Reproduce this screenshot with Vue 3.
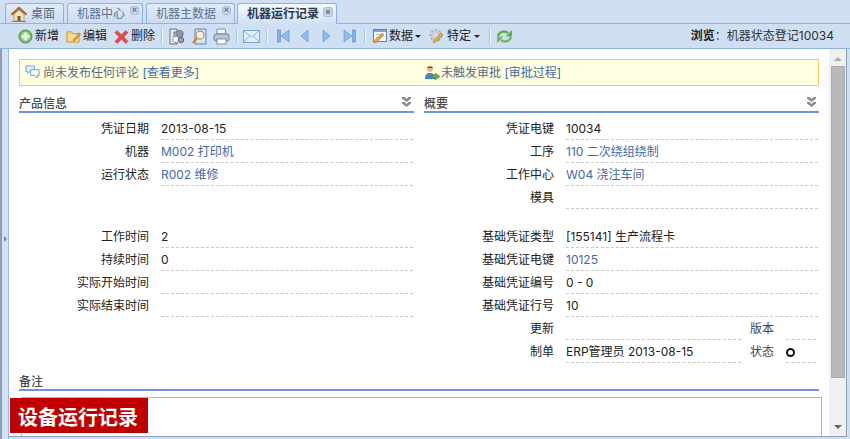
<script setup>
const leftA = [
  { l: '凭证日期', v: '2013-08-15' },
  { l: '机器', v: 'M002 打印机', link: true },
  { l: '运行状态', v: 'R002 维修', link: true },
]
const leftB = [
  { l: '工作时间', v: '2' },
  { l: '持续时间', v: '0' },
  { l: '实际开始时间', v: '' },
  { l: '实际结束时间', v: '' },
]
const rightA = [
  { l: '凭证电键', v: '10034' },
  { l: '工序', v: '110 二次绕组绕制', link: true },
  { l: '工作中心', v: 'W04 浇注车间', link: true },
  { l: '模具', v: '' },
]
const rightB = [
  { l: '基础凭证类型', v: '[155141] 生产流程卡' },
  { l: '基础凭证电键', v: '10125', link: true },
  { l: '基础凭证编号', v: '0 - 0' },
  { l: '基础凭证行号', v: '10' },
]
</script>

<template>
  <div class="app">
    <div class="tabs">
      <div class="tab home">
        <svg class="i16" viewBox="0 0 16 16"><path d="M0 8 8 .8 16 8l-1.300 1.200L8 3.300 1.300 9.200z" fill="#b5652b" stroke="#7f4a20" stroke-width=".4"/><path d="M3 8.500 8 4l5 4.500V15H3z" fill="#f3e2b8" stroke="#9a7b4a" stroke-width=".6"/><rect x="6.500" y="10" width="3" height="5" fill="#7d5a33"/><path d="M1 15h14v1H1z" fill="#5da34a"/></svg>
        <span>桌面</span>
      </div>
      <div class="tab t2"><span>机器中心</span><i class="x">×</i></div>
      <div class="tab t3"><span>机器主数据</span><i class="x">×</i></div>
      <div class="tab active"><span>机器运行记录</span><i class="x">×</i></div>
    </div>

    <div class="toolbar">
      <button class="btn">
        <svg class="i15" viewBox="0 0 16 16"><circle cx="8" cy="8" r="7" fill="#79b865" stroke="#5c8f57"/><circle cx="8" cy="8" r="5" fill="#a7d79a"/><path d="M7 4h2v3h3v2H9v3H7V9H4V7h3z" fill="#fff"/></svg>
        <span>新增</span>
      </button>
      <button class="btn">
        <svg class="i15" viewBox="0 0 16 16"><path d="M1 3h5l1 2h7v9H1z" fill="#f5d67a" stroke="#c79a3e"/><path d="M3 7h10v1H3zM3 10h7v1H3z" fill="#fff3c4"/><path d="m8 11 6-7 1.500 1.500-6 7-2 .5z" fill="#e8a33c" stroke="#a96f1f" stroke-width=".5"/></svg>
        <span>编辑</span>
      </button>
      <button class="btn">
        <svg class="i15" viewBox="0 0 16 16"><path d="M3 1.500 8 6l4.500-4.500L15 4l-4.500 4.500L15 13l-2.500 2.500L8 11l-4.500 4.500L1 13l4.500-4.500L1 4z" fill="#e24b4b" stroke="#c53a3a" stroke-width=".5"/></svg>
        <span>删除</span>
      </button>
      <span class="sep"></span>
      <button class="btn ico w17">
        <svg class="i17" viewBox="0 0 17 17"><path d="M2 1h7v3H6v10l3 1v1H2z" fill="#e6e9ef" stroke="#4f5866" stroke-width=".8"/><circle cx="11.500" cy="6" r="3.700" fill="#8c95a5" stroke="#464e5c" stroke-width=".8" stroke-dasharray="1.500 .7"/><circle cx="8" cy="11.500" r="3.200" fill="#f1f3f7" stroke="#464e5c" stroke-width=".8" stroke-dasharray="1.500 .7"/><circle cx="13" cy="12" r="2.700" fill="#9aa3b2" stroke="#464e5c" stroke-width=".8"/></svg>
      </button>
      <button class="btn ico w15">
        <svg class="i15h" viewBox="0 0 15 17"><path d="M3 1h11v15H3z" fill="#cfe3fb" stroke="#5a85bf"/><circle cx="8" cy="7" r="4" fill="#e8f2fd" stroke="#e2912f" stroke-width="1.300"/><path d="M5 10 1 15" stroke="#d6812a" stroke-width="2.200"/></svg>
      </button>
      <button class="btn ico w17 gapped">
        <svg class="i17" viewBox="0 0 17 17"><path d="M4 1h8l1 5H4z" fill="#f3f6fa" stroke="#5b7fa8" stroke-width=".8"/><rect x="1" y="6" width="15" height="7" rx="2" fill="#b6c6da" stroke="#5f6d80" stroke-width=".8"/><rect x="4" y="11" width="9" height="5" fill="#fff" stroke="#6a7686" stroke-width=".8"/></svg>
      </button>
      <span class="sep"></span>
      <button class="btn ico w17 gapped">
        <svg class="i17" viewBox="0 0 17 13"><rect x=".5" y=".5" width="16" height="12" fill="#e3eefb" stroke="#7da6d8"/><path d="m1 1 7.500 6L16 1M1 12l5.500-6M16 12l-5.500-6" fill="none" stroke="#8fb3e0"/></svg>
      </button>
      <span class="sep"></span>
      <button class="btn ico nav first">
        <svg class="i13" viewBox="0 0 13 14"><rect x=".5" y="1" width="3" height="12" fill="#7fb0e8" stroke="#5a8fd0" stroke-width=".6"/><path d="M12 1v12L4 7z" fill="#8fbcee" stroke="#5a8fd0" stroke-width=".6"/></svg>
      </button>
      <button class="btn ico nav prev">
        <svg class="i9" viewBox="0 0 9 14"><path d="M8 1v12L1 7z" fill="#8fbcee" stroke="#5a8fd0" stroke-width=".6"/></svg>
      </button>
      <button class="btn ico nav next">
        <svg class="i9" viewBox="0 0 9 14"><path d="M1 1v12l7-6z" fill="#8fbcee" stroke="#5a8fd0" stroke-width=".6"/></svg>
      </button>
      <button class="btn ico nav last">
        <svg class="i13" viewBox="0 0 13 14"><path d="M1 1v12l8-6z" fill="#8fbcee" stroke="#5a8fd0" stroke-width=".6"/><rect x="9.500" y="1" width="3" height="12" fill="#7fb0e8" stroke="#5a8fd0" stroke-width=".6"/></svg>
      </button>
      <span class="sep s5"></span>
      <button class="btn menu">
        <svg class="i16" viewBox="0 0 16 16"><rect x="1.500" y="1.500" width="13" height="12" fill="#f4f8fd" stroke="#5b84b8"/><path d="M2 2h12v2H2z" fill="#7ea6d8"/><path d="M4 6h8v1H4zM4 9h5v1H4z" fill="#a9c3e2"/><path d="m2 15 1-3 7-7 2 2-7 7z" fill="#eaa63d" stroke="#a8701f" stroke-width=".5"/></svg>
        <span>数据</span><i class="caret"></i>
      </button>
      <button class="btn menu m2">
        <svg class="i16" viewBox="0 0 16 16"><circle cx="7" cy="7.500" r="4.500" fill="none" stroke="#a6a6a0" stroke-width="3.500" stroke-dasharray="2 1.300"/><circle cx="7" cy="7.500" r="4" fill="none" stroke="#cfcfca" stroke-width="2"/><path d="m4 15 1-3 7-7 2 2-7 7z" fill="#eaa63d" stroke="#a8701f" stroke-width=".5"/></svg>
        <span>特定</span><i class="caret"></i>
      </button>
      <span class="sep s6"></span>
      <button class="btn ico refresh">
        <svg class="i17" viewBox="0 0 17 15"><path d="M2 7C3 3 8 1 12 4" fill="none" stroke="#5fae48" stroke-width="2.600"/><path d="M16 1v6.500H9.500z" fill="#5fae48"/><path d="M15 8c-1 4-6 6-10 3" fill="none" stroke="#6fbb57" stroke-width="2.600"/><path d="M1 14V7.500h6.500z" fill="#6fbb57"/></svg>
      </button>
      <div class="browse"><b>浏览</b><span>：机器状态登记10034</span></div>
    </div>

    <div class="main">
      <div class="strip"><i class="grip"></i></div>
      <div class="content">
        <div class="scroll-body">
          <div class="notice">
            <div class="note">
              <svg class="i15" viewBox="0 0 16 16"><path d="M1 1h9v6H5l-2 2V7H1z" fill="#e4f0fc" stroke="#6f9bd1"/><path d="M6 5h9v6h-2v3l-3-3H6z" fill="#fff" stroke="#6f9bd1"/></svg>
              <span>尚未发布任何评论 <a>[查看更多]</a></span>
            </div>
            <div class="note n2">
              <svg class="i16" viewBox="0 0 16 16"><circle cx="6" cy="4" r="3" fill="#e7b98a"/><path d="M3 3c0-2 6-2 6 0H3z" fill="#7a4a22"/><path d="M1 14c0-5 2-6 5-6s5 1 5 6z" fill="#4d82c4"/><path d="M8 10h3V8l5 3.500-5 3.500v-2H8z" fill="#64ab4e" stroke="#3f7f33" stroke-width=".5"/></svg>
              <span>未触发审批 <a>[审批过程]</a></span>
            </div>
          </div>

          <div class="cols">
            <section class="col">
              <header class="head">
                <h3>产品信息</h3>
                <svg class="chev" viewBox="0 0 9 10"><path d="M0 0h2.500L4.500 2 6.500 0H9v1.500L4.500 5 0 1.500zM0 5h2.500l2 2 2-2H9v1.500L4.500 10 0 6.500z" fill="#8a8a8a"/></svg>
              </header>
              <div class="form">
                <div v-for="r in leftA" :key="r.l" class="row">
                  <label>{{ r.l }}</label><div class="val" :class="{ link: r.link }">{{ r.v }}</div>
                </div>
                <div class="gap left-gap"></div>
                <div v-for="r in leftB" :key="r.l" class="row">
                  <label>{{ r.l }}</label><div class="val">{{ r.v }}</div>
                </div>
              </div>
            </section>
            <section class="col">
              <header class="head">
                <h3>概要</h3>
                <svg class="chev" viewBox="0 0 9 10"><path d="M0 0h2.500L4.500 2 6.500 0H9v1.500L4.500 5 0 1.500zM0 5h2.500l2 2 2-2H9v1.500L4.500 10 0 6.500z" fill="#8a8a8a"/></svg>
              </header>
              <div class="form">
                <div v-for="r in rightA" :key="r.l" class="row">
                  <label>{{ r.l }}</label><div class="val" :class="{ link: r.link }">{{ r.v }}</div>
                </div>
                <div class="gap"></div>
                <div v-for="r in rightB" :key="r.l" class="row">
                  <label>{{ r.l }}</label><div class="val" :class="{ link: r.link }">{{ r.v }}</div>
                </div>
                <div class="row">
                  <label>更新</label><div class="val short"></div>
                  <label class="l2">版本</label><div class="val tiny"></div>
                </div>
                <div class="row">
                  <label>制单</label><div class="val short">ERP管理员 2013-08-15</div>
                  <label class="l2">状态</label><div class="val tiny"><i class="ring"></i></div>
                </div>
              </div>
            </section>
          </div>

          <header class="head remark"><h3>备注</h3></header>
          <div class="textarea"></div>
        </div>
        <div class="scrollbar">
          <i class="arr up"></i>
          <div class="thumb"></div>
          <i class="arr down"></i>
        </div>
      </div>
    </div>
    <div class="banner">设备运行记录</div>
  </div>
</template>

<style>
html, body { margin: 0; padding: 0; overflow: hidden; }
</style>

<style scoped>
.app {
  position: relative;
  width: 850px;
  height: 439px;
  overflow: hidden;
  display: flex;
  flex-direction: column;
  background: #cfdff4;
  font: 12px/16px Inter, "Noto Sans CJK SC", sans-serif;
  color: #222;
  box-sizing: border-box;
}
.i13 { width: 13px; height: 14px; }
.i9 { width: 9px; height: 14px; }
.i15 { width: 15px; height: 15px; }
.i15h { width: 15px; height: 17px; }
.i16 { width: 16px; height: 16px; }
.i17 { width: 17px; height: 17px; }
svg { display: block; flex: none; }

.tabs {
  height: 24px;
  box-sizing: border-box;
  flex: none;
  display: flex;
  align-items: flex-end;
  padding-left: 5px;
  gap: 3px;
  border-bottom: 1px solid #8db2e3;
  background: #d0dff3;
}
.tab {
  height: 20px;
  box-sizing: border-box;
  display: flex;
  align-items: center;
  border: 1px solid #8db2e3;
  border-bottom: 0;
  border-radius: 3px 3px 0 0;
  background: linear-gradient(#e1ebf8, #cddcf2);
  color: #5a7495;
  padding-left: 9px;
  position: relative;
}
.tab.home { width: 59px; padding-left: 5px; gap: 4px; color: #4f6b8f; }
.t2 { width: 76px; }
.t3 { width: 89px; }
.tab.active {
  width: 100px;
  margin-left: -1px;
  height: 21px;
  margin-bottom: -1px;
  background: linear-gradient(#f4f8fd, #d2e0f5);
  color: #2b3b50;
  font-weight: 600;
}
.x {
  position: absolute;
  right: 3px;
  top: 2px;
  width: 9px;
  height: 9px;
  border-radius: 3px;
  background: #c9d6e8;
  border: 1px solid #a8bcd6;
  box-sizing: border-box;
  font: 700 9px/7px "Liberation Sans", sans-serif;
  color: #5f7594;
  text-align: center;
}
.tab.active .x { right: 3px; top: 3px; width: 10px; height: 10px; line-height: 8px; color: #4a5e7a; }

.toolbar {
  height: 25px;
  box-sizing: border-box;
  flex: none;
  display: flex;
  align-items: center;
  padding-left: 18px;
  border-bottom: 1px solid #8db2e3;
  background: #cfdff4;
}
.btn {
  all: unset;
  display: flex;
  align-items: center;
  gap: 2px;
  color: #222;
  margin-right: 7px;
  white-space: nowrap;
}
.btn.ico { margin-right: 6px; }
.btn.ico.gapped { margin-right: 7px; }
.w15 { width: 15px; margin-left: 1px; }
.w17 { width: 17px; }
.sep {
  box-sizing: border-box;
  width: 2px;
  height: 16px;
  background: #f2f7fd;
  border-left: 1px solid #aec6e6;
  margin-left: -1px;
  margin-right: 5px;
}
.btn.ico.nav { margin-right: 0; }
.first { margin-left: 4px; }
.prev { margin-left: 10px; }
.next { margin-left: 13px; }
.last { margin-left: 12px; }
.s5 { margin-left: 8px; margin-right: 6px; }
.btn.menu { gap: 1px; margin-right: 0; }
.m2 { margin-left: 8px; }
.btn.m2 { gap: 2px; }
.caret { width: 0; height: 0; border: 3px solid transparent; border-top-color: #222; border-bottom: 0; margin-left: 1px; }
.s6 { margin-left: 9px; margin-right: 5px; }
.btn.refresh { margin-left: 0; }
.browse { margin-left: auto; margin-right: 16px; color: #333; white-space: nowrap; }
.browse b { font-weight: 700; color: #222; }

.main { flex: 1; min-height: 0; display: flex; }
.strip {
  width: 9px;
  box-sizing: border-box;
  flex: none;
  border-left: 2px solid #8a9dbb;
  border-right: 1px solid #99bbe8;
  background: #d4e1f3;
  display: flex;
  align-items: center;
  padding-bottom: 10px;
}
.grip {
  width: 0; height: 0;
  margin-left: 2px;
  border: 3px solid transparent;
  border-left-color: #7d8a99;
  border-right: 0;
}
.content {
  flex: 1;
  min-width: 0;
  margin: 0 3px 2px 0;
  background: #fff;
  display: flex;
  border-bottom: 1px solid #8a9dbb;
  border-right: 1px solid #8a9dbb;
}
.scroll-body { flex: 1; min-width: 0; padding: 10px 0 0 10px; overflow: hidden; }
.scrollbar {
  width: 17px;
  flex: none;
  background: #f0f0f0;
  display: flex;
  flex-direction: column;
  align-items: center;
}
.thumb {
  width: 14px;
  height: 312px;
  box-sizing: border-box;
  background: #b9b9b9;
  border: 1px solid #aaa;
  flex: none;
  margin-top: 5px;
}
.arr { width: 0; height: 0; border: 4px solid transparent; flex: none; }
.arr.up { border-bottom-color: #aaa; border-top: 0; margin-top: 8px; }
.arr.down { border-top-color: #666; border-bottom: 0; margin-top: 47px; }

.notice {
  width: 800px;
  height: 27px;
  box-sizing: border-box;
  border: 1px solid #fbc55f;
  background: #ffffe1;
  display: flex;
  align-items: center;
  color: #5c6a7a;
}
.note { display: flex; align-items: center; gap: 3px; width: 400px; padding-left: 5px; box-sizing: border-box; white-space: pre; }
.note.n2 { gap: 1px; padding-left: 5px; }
.note a { color: #3f6aa8; }

.cols { display: flex; gap: 10px; width: 800px; margin-top: 9px; }
.col { flex: 1 1 0; min-width: 0; }
.head {
  height: 18px;
  box-sizing: border-box;
  border-bottom: 2px solid #6d95de;
  display: flex;
  align-items: flex-end;
  justify-content: space-between;
}
.head h3 { margin: 0 0 -1px; font: inherit; font-weight: 500; color: #4a4a4a; line-height: 16px; }
.chev { width: 9px; height: 10px; margin: 0 3px 4px 0; }
.form { padding-top: 6px; }
.row { display: flex; height: 23px; }
.row label { width: 130px; flex: none; text-align: right; line-height: 20px; color: #222; }
.val {
  flex: 1;
  box-sizing: border-box;
  margin-left: 12px;
  margin-right: 1px;
  min-width: 0;
  height: 21px;
  line-height: 20px;
  border-bottom: 1px dashed #c8c8c8;
  white-space: nowrap;
  display: flex;
  align-items: center;
}
.link { color: #3f6aa8; }
.gap { height: 16px; }
.left-gap { height: 39px; }
.val.short { flex: none; width: 175px; margin-right: 0; }
.row label.l2 { width: 33px; color: #444; }
.val.tiny { flex: none; width: 30px; }
.ring { width: 9px; height: 9px; box-sizing: border-box; border: 2.5px solid #111; border-radius: 50%; }

.remark { width: 800px; margin-top: 8px; }
.textarea {
  margin: 6px 0 0 2px;
  width: 801px;
  height: 60px;
  box-sizing: border-box;
  border: 1px solid #99bbe8;
}
.banner {
  position: absolute;
  left: 10px;
  top: 398px;
  width: 138px;
  height: 35px;
  box-sizing: border-box;
  background: #c00000;
  color: #fff;
  font: 700 20px/37px "Noto Sans CJK SC", sans-serif;
  padding-left: 8px;
}
</style>
